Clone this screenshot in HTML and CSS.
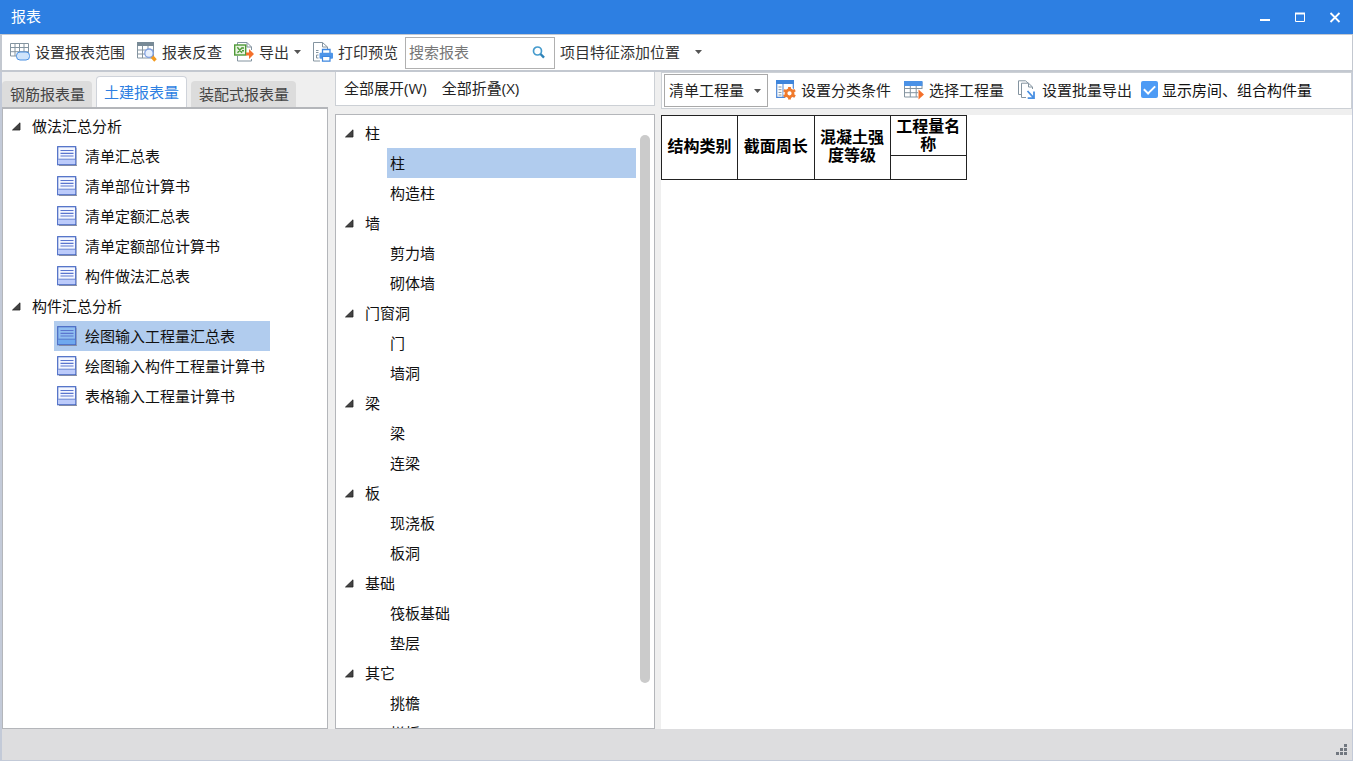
FILE: index.html
```html
<!DOCTYPE html>
<html lang="zh-CN">
<head>
<meta charset="utf-8">
<title>报表</title>
<link rel="stylesheet" href="styles.css">
</head>
<body>
<svg class="defs" aria-hidden="true">
  <symbol id="doc" viewBox="0 0 20 20">
    <path d="M2 19.5H20V2" fill="none" stroke="#9a9a9a" stroke-width="1"/>
    <rect class="doc-page" x=".7" y=".7" width="18" height="18" stroke="#4668c4" stroke-width="1.2"/>
    <path class="doc-foot" d="M1.3 13.5H18.2V18.1H1.3z"/>
    <path d="M1.3 13.2H18.2" stroke="#4668c4" stroke-width=".8"/>
    <path d="M3.5 4.5H16.5M3.5 7.3H16.5M3.5 10H16.5" stroke="#5b76cf" stroke-width="1.2"/>
  </symbol>
  <symbol id="twisty" viewBox="0 0 9 9"><path d="M8 .8V8H.5z" fill="#444" stroke="#222" stroke-width=".8"/></symbol>
  <symbol id="caret" viewBox="0 0 7 4"><path d="M0 0H7L3.5 4z" fill="#555"/></symbol>
</svg>
<div class="window">
  <header class="titlebar">
    <h1 class="title">报表</h1>
    <button class="win-btn" aria-label="最小化"><svg width="12" height="12"><path d="M1 9H11" stroke="#fff" stroke-width="2"/></svg></button>
    <button class="win-btn" aria-label="最大化"><svg width="12" height="12"><path d="M1.5 2.5H10.5V10.5H1.5z" fill="none" stroke="#fff"/><path d="M1 2.5H11" stroke="#fff" stroke-width="2"/></svg></button>
    <button class="win-btn" aria-label="关闭"><svg width="12" height="12"><path d="M1.5 2L10.5 11M10.5 2L1.5 11" stroke="#fff" stroke-width="1.8"/></svg></button>
  </header>

  <div class="toolbar">
    <button class="tool"><svg width="20" height="20" viewBox="0 0 20 20"><path d="M.5 1.5H18.5V14H.5zM.5 5.5H18.5M.5 9.7H18.5M5 1.5V14M9.5 1.5V14M14 1.5V14" fill="none" stroke="#8494a0"/><rect x="6.5" y="10" width="13" height="8" rx="3.5" fill="#cfe4fb" stroke="#4a90e2"/></svg>设置报表范围</button>
    <button class="tool"><svg width="20" height="20" viewBox="0 0 20 20"><path d="M.5 1.5H16.5V16H.5zM.5 8H16.5M.5 12H16.5M5.5 3V16M11 3V16" fill="none" stroke="#8494a0"/><path d="M0 0H17V4H0z" fill="#788a96"/><path d="M14.5 14L18.5 18.5" stroke="#f39a1e" stroke-width="3.4"/><circle cx="12" cy="11.2" r="4.2" fill="#e6effd" stroke="#7f9fe0" stroke-width="1.3"/></svg>报表反查</button>
    <button class="tool"><svg width="20" height="20" viewBox="0 0 20 20"><path d="M3.5 14V19H17.5V17M3.5 3V.5H13L17.5 5V8M13 .5V5H17.5" fill="none" stroke="#8494a0"/><rect x=".7" y="3" width="11" height="10" fill="#e9f4e2" stroke="#4f9a38" stroke-width="1.4"/><path d="M3.3 5.3L8 10.7M8.5 5.3L3.5 10.7M8 6H10M8 8.7H10" stroke="#4f9a38" stroke-width="1.4"/><path d="M12 10.5H15V7L20 12L15 17V13.5H12z" fill="#f4702a"/></svg>导出<svg class="caret"><use href="#caret"/></svg></button>
    <button class="tool"><svg width="20" height="20" viewBox="0 0 20 20"><path d="M7 19H.5V.5H9.5L14.5 5V7M9.5 .5V5H14.5" fill="none" stroke="#8494a0"/><path d="M3 8.5H5.5M3 10.5H5.5M5.5 13H3.5V16H5.5" stroke="#8494a0" fill="none"/><path d="M9.5 11V7.5H17V11" fill="#fff" stroke="#3d86e0" stroke-width="1.3"/><rect x="6.5" y="10.7" width="13.5" height="6" rx="1" fill="#4d94e8"/><path d="M9.5 14.5H17V19.2H9.5z" fill="#fff" stroke="#3d86e0" stroke-width="1.2"/></svg>打印预览</button>
    <div class="search">
      <input class="search-input" type="text" placeholder="搜索报表" aria-label="搜索报表">
      <button class="search-btn" aria-label="搜索"><svg width="14" height="14" viewBox="0 0 14 14"><circle cx="5.5" cy="6" r="4" fill="none" stroke="#459bcd" stroke-width="1.7"/><path d="M8.5 9L12 12.6" stroke="#2f83b8" stroke-width="2.4"/></svg></button>
    </div>
    <button class="tool tool-menu">项目特征添加位置<svg class="caret"><use href="#caret"/></svg></button>
  </div>

  <main class="body">
    <section class="reports">
      <div class="tabs" role="tablist">
        <button class="tab" role="tab" aria-selected="false">钢筋报表量</button>
        <button class="tab active" role="tab" aria-selected="true">土建报表量</button>
        <button class="tab" role="tab" aria-selected="false">装配式报表量</button>
      </div>
      <div class="panel report-panel">
        <ul class="tree">
          <li><div class="node"><svg class="twisty"><use href="#twisty"/></svg>做法汇总分析</div>
            <ul class="leaves">
              <li class="leaf"><svg class="doc"><use href="#doc"/></svg>清单汇总表</li>
              <li class="leaf"><svg class="doc"><use href="#doc"/></svg>清单部位计算书</li>
              <li class="leaf"><svg class="doc"><use href="#doc"/></svg>清单定额汇总表</li>
              <li class="leaf"><svg class="doc"><use href="#doc"/></svg>清单定额部位计算书</li>
              <li class="leaf"><svg class="doc"><use href="#doc"/></svg>构件做法汇总表</li>
            </ul>
          </li>
          <li><div class="node"><svg class="twisty"><use href="#twisty"/></svg>构件汇总分析</div>
            <ul class="leaves">
              <li class="leaf selected"><svg class="doc"><use href="#doc"/></svg>绘图输入工程量汇总表</li>
              <li class="leaf"><svg class="doc"><use href="#doc"/></svg>绘图输入构件工程量计算书</li>
              <li class="leaf"><svg class="doc"><use href="#doc"/></svg>表格输入工程量计算书</li>
            </ul>
          </li>
        </ul>
      </div>
    </section>

    <section class="elements">
      <div class="bar element-bar">
        <button class="tool">全部展开(W)</button>
        <button class="tool">全部折叠(X)</button>
      </div>
      <div class="panel element-panel">
        <ul class="tree">
          <li><div class="node"><svg class="twisty"><use href="#twisty"/></svg>柱</div>
            <ul class="leaves"><li class="leaf selected">柱</li><li class="leaf">构造柱</li></ul></li>
          <li><div class="node"><svg class="twisty"><use href="#twisty"/></svg>墙</div>
            <ul class="leaves"><li class="leaf">剪力墙</li><li class="leaf">砌体墙</li></ul></li>
          <li><div class="node"><svg class="twisty"><use href="#twisty"/></svg>门窗洞</div>
            <ul class="leaves"><li class="leaf">门</li><li class="leaf">墙洞</li></ul></li>
          <li><div class="node"><svg class="twisty"><use href="#twisty"/></svg>梁</div>
            <ul class="leaves"><li class="leaf">梁</li><li class="leaf">连梁</li></ul></li>
          <li><div class="node"><svg class="twisty"><use href="#twisty"/></svg>板</div>
            <ul class="leaves"><li class="leaf">现浇板</li><li class="leaf">板洞</li></ul></li>
          <li><div class="node"><svg class="twisty"><use href="#twisty"/></svg>基础</div>
            <ul class="leaves"><li class="leaf">筏板基础</li><li class="leaf">垫层</li></ul></li>
          <li><div class="node"><svg class="twisty"><use href="#twisty"/></svg>其它</div>
            <ul class="leaves"><li class="leaf">挑檐</li><li class="leaf">栏板</li></ul></li>
        </ul>
        <div class="scroll-thumb"></div>
      </div>
    </section>

    <section class="result">
      <div class="bar result-bar">
        <div class="picker">
          <select class="picker-select" aria-label="工程量类型"><option>清单工程量</option></select>
          <svg class="caret picker-caret"><use href="#caret"/></svg>
        </div>
        <button class="tool"><svg width="20" height="20" viewBox="0 0 20 20"><path d="M.7 1V17.3H17.3V1z" fill="#fff" stroke="#4a86d8" stroke-width="1.2"/><path d="M0 0H18V4H0z" fill="#3f86dc"/><path d="M7 4V17" stroke="#4a86d8"/><path d="M2.5 7H5.5M2.5 9.7H5.5M2.5 12.4H5.5M2.5 15H5.5" stroke="#8494a0"/><circle cx="13.5" cy="13.3" r="6" fill="#fff"/><path d="M13.5 7V19.6M7.9 10.1L19.1 16.5M7.9 16.5L19.1 10.1" stroke="#f07a2c" stroke-width="2.8"/><circle cx="13.5" cy="13.3" r="3.5" fill="#fff" stroke="#f07a2c" stroke-width="2.8"/></svg>设置分类条件</button>
        <button class="tool"><svg width="20" height="20" viewBox="0 0 20 20"><path d="M.5 2H18V17H.5zM.5 8.5H18M.5 12.7H18M6.3 5V17M12.2 5V17" fill="#fff" stroke="#8494a0"/><path d="M0 1H18.5V6H0z" fill="#4b92e6"/><path d="M14 9H20V19H14z" fill="#fff"/><path d="M14.5 9.5L20 14.5L14.5 19.5z" fill="#f4702a"/></svg>选择工程量</button>
        <button class="tool"><svg width="20" height="20" viewBox="0 0 20 20"><path d="M4 14.5H1.5V.8H8.5L11 3" fill="none" stroke="#8494a0"/><path d="M9 17.5H4.5V3.2H11.5L15.5 7V9M11.5 3.2V7H15.5" fill="none" stroke="#8494a0"/><path d="M10.5 11L16.3 17.3M17 11.5V18.2H10.7" fill="none" stroke="#4a90e2" stroke-width="1.8"/></svg>设置批量导出</button>
        <label class="check"><input class="check-box" type="checkbox" checked>显示房间、组合构件量</label>
      </div>
      <div class="sheet">
        <table class="grid">
          <tr class="grid-top"><th rowspan="2">结构类别</th><th rowspan="2">截面周长</th><th rowspan="2">混凝土强度等级</th><th>工程量名称</th></tr>
          <tr class="grid-sub"><td></td></tr>
        </table>
      </div>
    </section>
  </main>

  <footer class="statusbar">
    <svg width="12" height="12" viewBox="0 0 12 12"><path d="M8 0H11V3H8zM4 4H7V7H4zM8 4H11V7H8zM0 8H3V11H0zM4 8H7V11H4zM8 8H11V11H8z" fill="#717780"/></svg>
  </footer>
</div>
</body>
</html>
```

FILE: styles.css
```css
* { box-sizing: border-box; }

body {
  margin: 0;
  font: 15px/20px "Open Sans", "Noto Sans CJK SC", sans-serif;
  color: #111;
}

button, input, select { font: inherit; color: inherit; }
button { border: 0; background: none; padding: 0; }
ul { list-style: none; margin: 0; padding: 0; }
svg { flex: none; display: block; }
.defs { position: absolute; width: 0; height: 0; }

.window {
  display: flex;
  flex-direction: column;
  height: 100vh;
  background: #efefef;
}

.titlebar {
  display: flex;
  align-items: center;
  flex: none;
  height: 34px;
  padding: 0 12px 0 11px;
  background: #2d7fe2;
  color: #fff;
}
.title { flex: 1; margin: 0; font-size: 15px; font-weight: 400; line-height: 20px; padding-bottom: 2px; }
.win-btn { margin-left: 23px; }

.toolbar {
  display: flex;
  align-items: center;
  flex: none;
  gap: 3px;
  height: 38px;
  padding: 0 3px;
  background: #fff;
  border: solid #c3c8d0;
  border-width: 1px 1px 2px 2px;
  color: #333;
}
.tool {
  display: flex;
  align-items: center;
  gap: 5px;
  height: 26px;
  padding: 0 5px 1px;
  white-space: nowrap;
}
.caret { width: 7px; height: 4px; }
.toolbar .tool { padding-right: 4px; }
.toolbar .tool-menu { gap: 15px; margin-left: -3px; }

.search {
  display: flex;
  align-items: center;
  width: 150px;
  height: 32px;
  padding: 0 8px 1px 3px;
  border: 1px solid #b0b0b0;
  background: #fff;
}
.search-input { flex: 1; min-width: 0; border: 0; padding: 0; outline: 0; background: none; }
.search-input::placeholder { color: #777; opacity: 1; }

.body {
  display: flex;
  flex: 1;
  min-height: 0;
  border: solid #c3cad8;
  border-width: 0 1px 0 2px;
}
.panel { flex: 1; min-height: 0; background: #fff; border: 1px solid #b4b6ba; overflow: hidden; }
.bar { display: flex; align-items: center; flex: none; background: #fff; border: 1px solid #ccd0d5; color: #222; }

.reports { display: flex; flex-direction: column; flex: 0 0 326px; }
.tabs { display: flex; align-items: flex-end; gap: 4px; height: 35px; }
.tab {
  height: 26px;
  padding: 0 7px 1px 8px;
  border-radius: 4px 4px 0 0;
  background: #dcdcdc;
  color: #444;
}
.tab.active { height: 31px; padding: 0 7px; background: #fff; border: 1px solid #cfd3da; border-bottom: 0; color: #2d7fe2; }
.report-panel { padding-top: 2px; border-width: 2px 1px 1px; }

.node { display: flex; align-items: center; gap: 11px; height: 30px; padding-left: 9px; }
.twisty { width: 9px; height: 9px; }
.leaf { display: flex; align-items: center; height: 30px; --doc-page: #f4f7ff; --doc-foot: #bccbfb; }
.leaf.selected { background: #b1ccee; --doc-page: #8fbdf0; --doc-foot: #6fa9ef; }
.doc { width: 20px; height: 20px; }
.doc-page { fill: var(--doc-page); }
.doc-foot { fill: var(--doc-foot); }
.report-panel .leaves { display: flex; flex-direction: column; align-items: flex-start; padding-left: 51px; }
.report-panel .leaf { gap: 8px; padding: 0 35px 0 3px; }

.elements { display: flex; flex-direction: column; flex: 0 0 320px; gap: 8px; margin-left: 7px; }
.element-bar { height: 34px; padding: 0 3px; gap: 5px; border-top: 0; }
.element-panel { position: relative; padding-top: 3px; }
.element-panel .leaves { padding: 0 18px 0 51px; }
.element-panel .leaf { padding-left: 3px; }
.scroll-thumb {
  position: absolute;
  top: 20px;
  right: 4px;
  bottom: 45px;
  width: 10px;
  border-radius: 5px;
  background: #cbcbcb;
}

.result { display: flex; flex-direction: column; flex: 1; min-width: 0; gap: 6px; margin-left: 6px; }
.result-bar { height: 37px; gap: 4px; padding: 0 2px; }
.result-bar .tool { padding: 0 5px 1px 4px; }
.picker { position: relative; width: 104px; height: 33px; }
.picker-select {
  width: 100%;
  height: 100%;
  padding: 0 4px 1px;
  border: 1px solid #a9a9a9;
  border-radius: 0;
  background: #fff;
  appearance: none;
}
.picker-caret { position: absolute; right: 7px; top: 15px; }
.check { display: flex; align-items: center; gap: 4px; padding-bottom: 2px; white-space: nowrap; color: #111; }
.check-box {
  display: grid;
  place-items: center;
  appearance: none;
  width: 17px;
  height: 17px;
  margin: 0;
  border-radius: 2px;
  background: #4d9bf5;
}
.check-box:checked::before {
  content: "";
  width: 9px;
  height: 5px;
  margin-bottom: 3px;
  border: solid #fff;
  border-width: 0 0 2px 2px;
  transform: rotate(-45deg);
}

.sheet { flex: 1; background: #fff; }
.grid { width: 306px; table-layout: fixed; border-collapse: collapse; font: 700 16px/18px "Noto Sans CJK SC", sans-serif; color: #000; }
.grid th, .grid td { padding: 0; border: 1px solid #222; }
.grid th { padding-bottom: 6px; }
.grid-top { height: 40px; }
.grid-top th:last-child { padding-bottom: 3px; }
.grid-sub { height: 24px; }

.statusbar {
  display: flex;
  justify-content: flex-end;
  align-items: flex-end;
  flex: none;
  height: 32px;
  padding: 0 4px 4px;
  background: #dddddf;
  border: solid #c3cad8;
  border-width: 0 1px 1px 2px;
}
```
